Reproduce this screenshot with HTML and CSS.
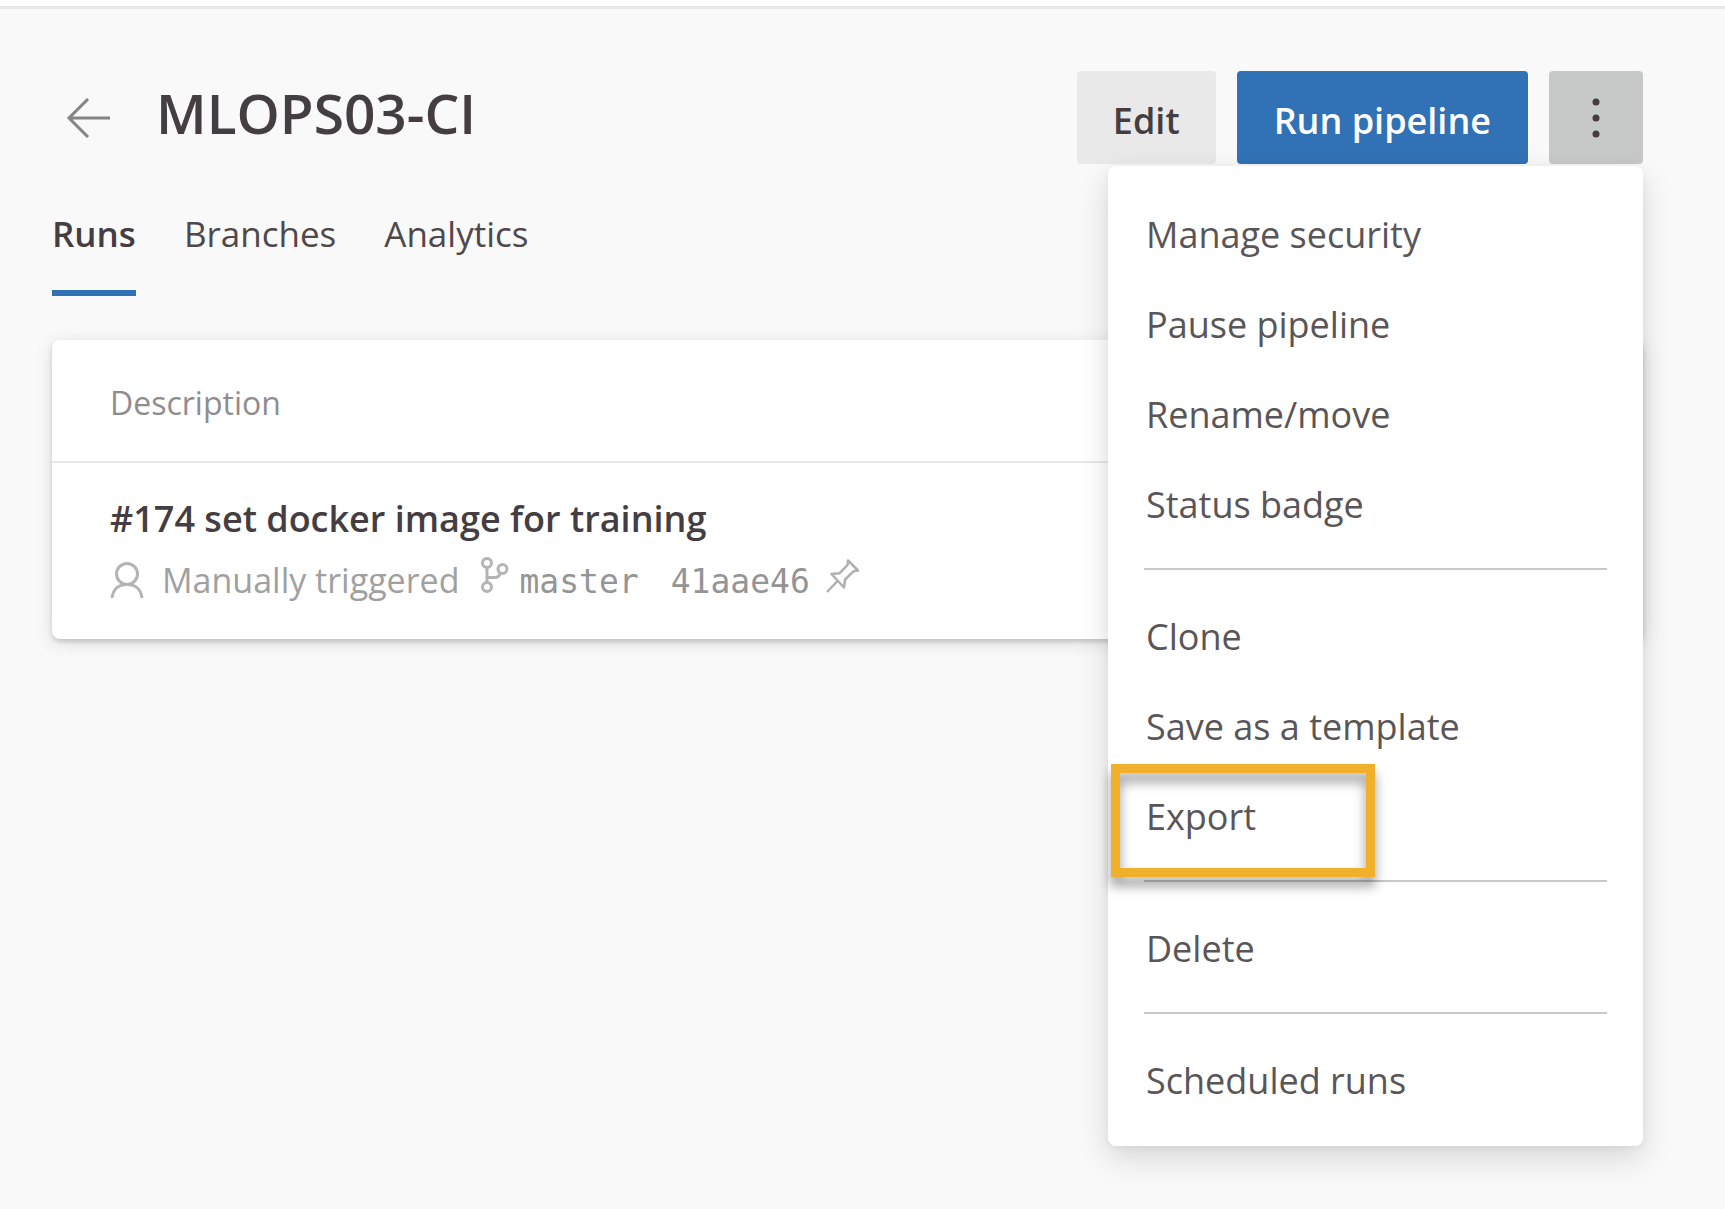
FILE: index.html
```html
<!DOCTYPE html>
<html lang="en">
<head>
<meta charset="utf-8">
<meta name="viewport" content="width=device-width, initial-scale=1">
<title>MLOPS03-CI</title>
<link rel="stylesheet" href="styles.css">
</head>
<body>
<div class="topbar"></div>
<main class="page">
  <header class="header">
    <a class="back" href="#" aria-label="Back">
      <svg width="44" height="40" viewBox="0 0 44 40" fill="none" stroke="#858384" stroke-width="3"><path d="M44 20H3M22 1 3 20l19 19"/></svg>
    </a>
    <h1 class="title">MLOPS03-CI</h1>
    <div class="actions">
      <button class="btn" type="button">Edit</button>
      <button class="btn btn-primary" type="button">Run pipeline</button>
      <div class="more">
        <button class="btn btn-more" type="button" aria-label="More actions" aria-expanded="true">
          <svg width="8" height="40" viewBox="0 0 8 40" fill="#443d41"><circle cx="4" cy="4" r="3.5"/><circle cx="4" cy="20" r="3.5"/><circle cx="4" cy="36" r="3.5"/></svg>
        </button>
        <ul class="menu">
          <li><button class="item" type="button">Manage security</button></li>
          <li><button class="item" type="button">Pause pipeline</button></li>
          <li><button class="item" type="button">Rename/move</button></li>
          <li><button class="item" type="button">Status badge</button></li>
          <li class="separator"></li>
          <li><button class="item" type="button">Clone</button></li>
          <li><button class="item" type="button">Save as a template</button></li>
          <li class="highlighted"><button class="item" type="button">Export</button></li>
          <li class="separator"></li>
          <li><button class="item" type="button">Delete</button></li>
          <li class="separator"></li>
          <li><button class="item" type="button">Scheduled runs</button></li>
        </ul>
      </div>
    </div>
  </header>
  <nav class="tabs">
    <a class="tab tab-active" href="#">Runs</a>
    <a class="tab" href="#">Branches</a>
    <a class="tab" href="#">Analytics</a>
  </nav>
  <table class="runs">
    <thead><tr><th scope="col">Description</th></tr></thead>
    <tbody>
      <tr><td>
        <a class="run-name" href="#">#174 set docker image for training</a>
        <div class="run-info">
          <svg class="person" width="34" height="36" viewBox="0 0 34 36" fill="none" stroke="#b4b4b4" stroke-width="3"><circle cx="17" cy="12" r="10.5"/><path d="M2 36C3 27 9 22.500 17 22.500S31 27 32 36"/></svg>
          <span class="trigger">Manually triggered</span>
          <svg class="branch" width="30" height="38" viewBox="0 0 30 38" fill="none" stroke="#b4b4b4" stroke-width="3"><circle cx="7" cy="7" r="4.500"/><circle cx="7" cy="31" r="4.500"/><circle cx="22.500" cy="13" r="4.500"/><path d="M7 12v14M7 21.500h9q3 0 4-4"/></svg>
          <span class="code">master</span>
          <span class="code hash">41aae46</span>
          <svg class="pin" width="34" height="36" viewBox="0 0 34 36" fill="none" stroke="#b0b0b0" stroke-width="2.500" stroke-linejoin="round"><path d="M22 2.500 32 12.500l-4.500.8L19 21.500l-1 8L5.500 16l8-.7 8-8.300zM12 22.500 1 34"/></svg>
        </div>
      </td></tr>
    </tbody>
  </table>
</main>
</body>
</html>
```
FILE: styles.css
```css
*,
*::after {
  box-sizing: border-box;
}

body {
  margin: 0;
  min-height: 100vh;
  background: #f9f9f9;
  color: #443d41;
  font: 36px/48px "Open Sans", "Noto Sans", sans-serif;
}

button {
  margin: 0;
  border: 0;
  font: inherit;
  color: inherit;
}

a {
  color: inherit;
  text-decoration: none;
}

svg {
  display: block;
  flex: none;
}

.topbar {
  height: 9px;
  background: #fff;
  border-bottom: 3px solid #e8e8e8;
}

.page {
  padding: 62px 82px 60px 52px;
}

.header {
  display: flex;
  align-items: center;
  height: 93px;
}

.back {
  padding: 0 46px 0 14px;
}

.title {
  margin: 0;
  padding-bottom: 10px;
  font-size: 55px;
  line-height: 72px;
  font-weight: 600;
}

.actions {
  display: flex;
  gap: 21px;
  margin-left: auto;
}

.btn {
  display: flex;
  align-items: center;
  justify-content: center;
  height: 93px;
  padding: 6px 36px 0;
  border-radius: 4px;
  background: #e9e9e9;
  font-weight: 600;
}

.btn-primary {
  padding: 6px 37px 0;
  background: #3171b5;
  color: #fff;
}

.btn-more {
  width: 94px;
  padding: 0;
  background: #c7c9c8;
}

.more {
  position: relative;
}

.menu {
  position: absolute;
  top: calc(100% + 2px);
  right: 0;
  z-index: 1;
  width: 535px;
  margin: 0;
  padding: 24px 36px 20px;
  list-style: none;
  background: #fff;
  border-radius: 8px;
  box-shadow: 0 12px 32px rgba(0, 0, 0, 0.14), 0 2px 8px rgba(0, 0, 0, 0.05);
}

.item {
  display: block;
  width: 100%;
  height: 90px;
  padding: 0 2px;
  background: none;
  color: #5a5557;
  text-align: left;
}

.separator {
  height: 2px;
  margin: 18px 0 22px;
  background: #c8c8c8;
}

.highlighted {
  position: relative;
}

.highlighted::after {
  content: "";
  position: absolute;
  top: -8px;
  left: -33px;
  width: 264px;
  height: 113px;
  border: 9px solid #f0b02c;
  filter: drop-shadow(0 9px 6px rgba(0, 0, 0, 0.4));
  pointer-events: none;
}

.tabs {
  display: flex;
  gap: 48px;
  margin: 46px 0 44px;
  font-size: 35px;
}

.tab {
  height: 86px;
  border-bottom: 6px solid transparent;
  color: #4e484b;
}

.tab-active {
  border-color: #3171b5;
  color: #443d41;
  font-weight: 600;
}

.runs {
  width: 100%;
  border-collapse: separate;
  border-spacing: 0;
  background: #fff;
  border-radius: 8px;
  box-shadow: 0 3px 4px rgba(0, 0, 0, 0.14), 0 4px 18px rgba(0, 0, 0, 0.12);
}

.runs th {
  height: 123px;
  padding: 4px 58px 0;
  border-bottom: 2px solid #e8e8e8;
  color: #8f8d8e;
  font-size: 32px;
  font-weight: 400;
  text-align: left;
}

.runs td {
  padding: 32px 58px 29px;
}

.run-name {
  display: block;
  font-weight: 600;
}

.run-info {
  display: flex;
  align-items: center;
  height: 60px;
  margin-top: 7px;
  color: #a0a0a0;
  font-size: 34px;
}

.trigger {
  margin: 0 20px 0 18px;
}

.branch {
  margin-bottom: 10px;
}

.code {
  margin-left: 10px;
  padding-top: 3px;
  color: #949494;
  font: 33px/48px "DejaVu Sans Mono", "Liberation Mono", monospace;
}

.hash {
  margin: 0 16px 0 32px;
}

.pin {
  margin-bottom: 8px;
}
```
